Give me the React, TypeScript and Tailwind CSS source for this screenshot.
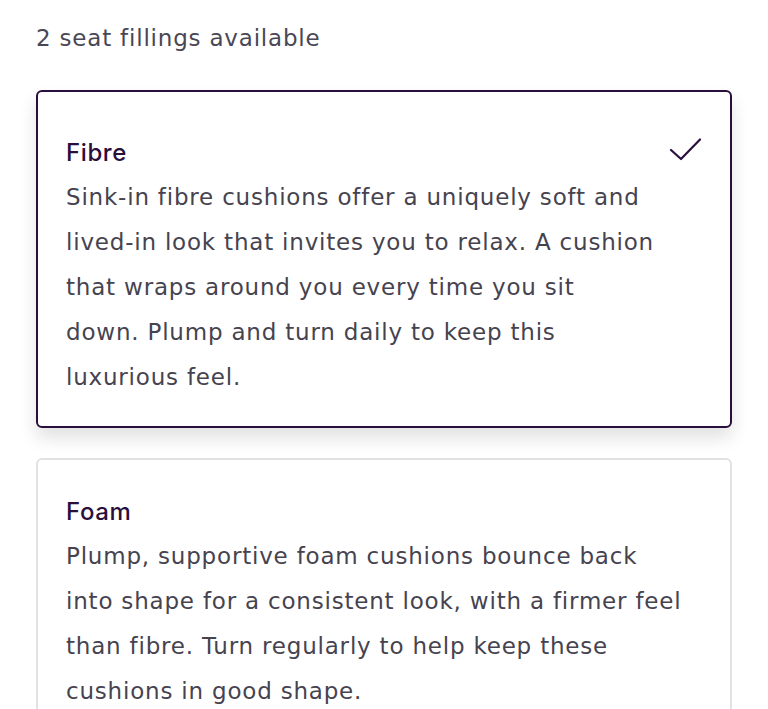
import React from 'react';

const fillings = [
    {
        name: 'Fibre',
        selected: true,
        lines: [
            'Sink-in fibre cushions offer a uniquely soft and',
            'lived-in look that invites you to relax. A cushion',
            'that wraps around you every time you sit',
            'down. Plump and turn daily to keep this',
            'luxurious feel.',
        ],
    },
    {
        name: 'Foam',
        selected: false,
        lines: [
            'Plump, supportive foam cushions bounce back',
            'into shape for a consistent look, with a firmer feel',
            'than fibre. Turn regularly to help keep these',
            'cushions in good shape.',
        ],
    },
];

function CheckIcon() {
    return (
        <svg width="34" height="30" viewBox="0 0 34 30" fill="none" className="shrink-0">
            <path d="M3 12 13 21 32 1.5" stroke="#2a0f3d" strokeWidth="2.2" strokeLinecap="round" strokeLinejoin="round" />
        </svg>
    );
}

export default function App() {
    return (
        <div
            className="min-h-screen bg-white px-9 pt-[17px] tracking-[0.8px]"
            style={{ fontFamily: '"DejaVu Sans", "Noto Sans", sans-serif' }}
        >
            <p className="text-[23px] leading-[42px] text-[#4a4754]">2 seat fillings available</p>

            <div className="mt-[31px] flex flex-col gap-[30px]">
                {fillings.map((f) => (
                    <div
                        key={f.name}
                        className={
                            f.selected
                                ? 'rounded-md border-2 border-[#2a0f3d] bg-white px-[28px] pb-[26px] pt-[38px] shadow-[0_10px_18px_rgba(0,0,0,0.12)]'
                                : 'rounded-md border-2 border-[#e2e2e4] bg-white px-[28px] pb-[26px] pt-[29px]'
                        }
                    >
                        <div className="flex items-center justify-between">
                            <h3
                                className="text-[24px] font-medium leading-[45px] tracking-[0.6px] text-[#2a0f3d]"
                                style={{ fontFamily: 'Inter, "Noto Sans", sans-serif' }}
                            >
                                {f.name}
                            </h3>
                            {f.selected && <CheckIcon />}
                        </div>
                        <p className="whitespace-nowrap text-[23px] leading-[45px] text-[#46434f]">
                            {f.lines.map((line, i) => (
                                <React.Fragment key={i}>
                                    {line}
                                    {i < f.lines.length - 1 && <br />}
                                </React.Fragment>
                            ))}
                        </p>
                    </div>
                ))}
            </div>
        </div>
    );
}
